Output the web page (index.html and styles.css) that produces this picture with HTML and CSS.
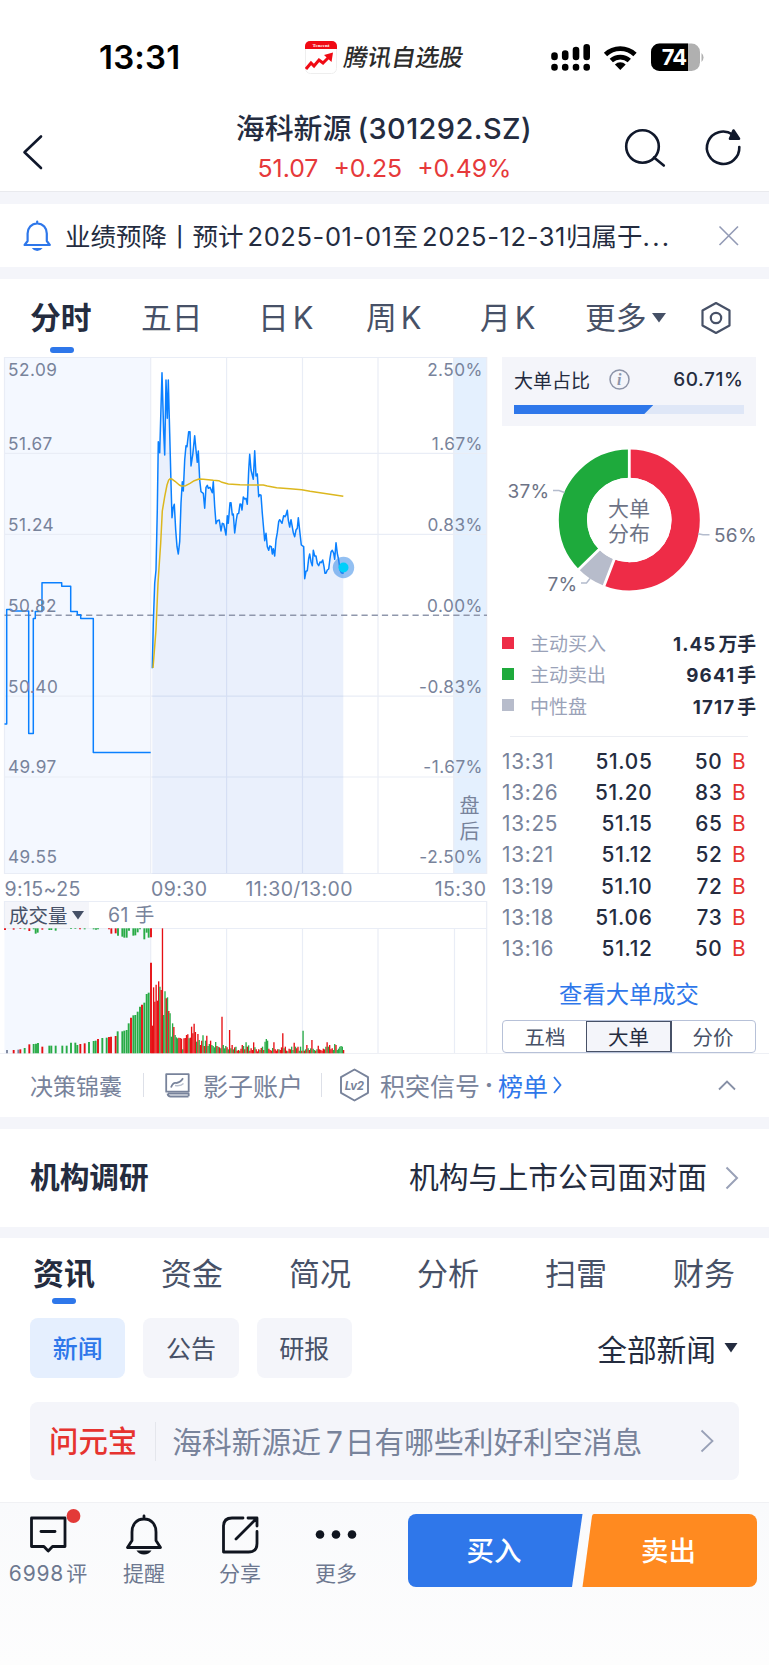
FILE: index.html
```html
<!DOCTYPE html>
<html lang="zh-CN">
<head>
<meta charset="utf-8">
<title>海科新源 (301292.SZ)</title>
<link rel="stylesheet" href="styles.css">
</head>
<body>
<div class="status">
  <div class="clock">13:31</div>
  <div class="brand">
    <svg class="brand-icon" width="32" height="33" viewBox="0 0 32 33">
      <rect x=".5" y=".5" width="31" height="32" rx="5" fill="#fff" stroke="#eee"/>
      <path d="M0 8V5a5 5 0 0 1 5-5h22a5 5 0 0 1 5 5v3z" fill="#f00a14"/>
      <text x="16" y="6.2" text-anchor="middle" class="tiny">Tencent</text>
      <path d="M1 28l5-6 3 3 5-6 4 3 8-8" fill="none" stroke="#f00a14" stroke-width="3"/>
      <path d="M19 14l9-2.500-1.500 9.500z" fill="#f00a14"/>
    </svg>
    <span class="brand-name">腾讯自选股</span>
  </div>
  <svg class="status-icons" width="156" height="30" viewBox="550 43 156 30">
    <g stroke="#000" stroke-width="6.600" stroke-linecap="round">
      <path d="M554.500 55.500v1.500M565.200 53.500v3.500M576 50v7M586.700 47.300v9.700"/>
      <path d="M554.500 67v.5M565.200 67v.5M576 67v.5M586.700 67v.5"/>
    </g>
    <g fill="none" stroke="#000" stroke-width="4.800">
      <path d="M605.500 54.500a21.500 21.500 0 0 1 29.500 0"/>
      <path d="M611.300 60.600a13.300 13.300 0 0 1 18 0"/>
    </g>
    <path d="M620.300 70l-5.400-5.600a8 8 0 0 1 10.800 0z"/>
    <rect x="651" y="43.500" width="49" height="27.500" rx="8.500" fill="#b0b0b0"/>
    <path d="M688 43.500h-28.500a8.500 8.500 0 0 0-8.500 8.500v10.500a8.500 8.500 0 0 0 8.500 8.500h28.500z"/>
    <path d="M701.500 53a6 6 0 0 1 0 9z" fill="#b0b0b0"/>
    <text x="674" y="65" text-anchor="middle" class="batt">74</text>
  </svg>
</div>

<header class="head">
  <svg width="30" height="40" viewBox="18 132 30 40" class="ln back"><path d="M41 136.500L24.500 152.300L41 168"/></svg>
  <div class="head-mid">
    <h1 class="title">海科新源<span class="code">(301292.SZ)</span></h1>
    <div class="quote"><span>51.07</span><span>+0.25</span><span>+0.49%</span></div>
  </div>
  <svg width="124" height="44" viewBox="620 126 124 44" class="ln acts">
    <circle cx="642.500" cy="146.500" r="16.300"/><path d="M654 157.500l9.800 8"/>
    <path d="M732.500 134.500a16.200 16.200 0 1 0 6.800 12.500"/><path d="M733.500 130.500l5.500 8.200h-9z" fill="#10182b"/>
  </svg>
</header>

<section class="notice">
  <svg width="30" height="32" viewBox="22 220 30 32">
    <path d="M37.200 223.500v-2M37.200 223.500c-6 0-9.600 4.600-9.600 10v7.500l-3 4h25.200l-3-4v-7.500c0-5.400-3.600-10-9.600-10z" fill="none" stroke="#2e77ea" stroke-width="2.200" stroke-linecap="round" stroke-linejoin="round"/>
    <path d="M31.800 248h10.800q-2 3-5.400 3t-5.400-3z" fill="#2e77ea"/>
  </svg>
  <p class="notice-text">业绩预降丨预计<span class="num">2025-01-01</span>至<span class="num">2025-12-31</span>归属于<span class="dots">...</span></p>
  <svg width="22" height="22" viewBox="0 0 22 22"><path d="M1.500 1.500l18.500 18.500M20 1.500l-18.500 18.500" stroke="#929ab5" stroke-width="1.600"/></svg>
</section>

<nav class="tabs">
  <span class="on">分时</span><span>五日</span><span>日<i>K</i></span><span>周<i>K</i></span><span>月<i>K</i></span>
  <span>更多<svg class="caret" width="14" height="10" viewBox="0 0 14 10"><path d="M0 0h14l-7 9.500z" fill="#455066"/></svg></span>
  <svg class="gear" width="32" height="34" viewBox="0 0 32 34" fill="none" stroke="#475167" stroke-width="2.200" stroke-linejoin="round"><path d="M16 2l13.500 7.500v15L16 32 2.500 24.500v-15z"/><circle cx="16" cy="17" r="5.200"/></svg>
</nav>

<main class="market">
  <svg class="chart" width="490" height="697" viewBox="0 357 490 697">
    <rect x="4.500" y="357" width="146" height="516.500" fill="#f4f8ff"/>
    <rect x="453.700" y="357" width="33" height="516.500" fill="#e4f0fe"/>
    <rect x="4.500" y="901" width="84.500" height="27" fill="#f4f5fa"/>
    <rect x="4.500" y="928" width="146" height="125" fill="#f4f8ff"/>
    <g fill="none" stroke="#e9edf6" stroke-width="1.200">
      <path d="M4.500 357.500h482.200v516h-482.200zM4.500 453.400h482M4.500 534.300h482M4.500 696.200h482M4.500 777h482"/>
      <path d="M150.700 357v516M226.600 357v516M302.500 357v516M378 357v516M453.700 357v516"/>
      <path d="M4.500 901.500h482.200v27h-482.200zM150.700 928v125M226.600 928v125M302.500 928v125M378 928v125M454.500 928v125M486.700 928v125"/>
    </g>
    <path id="area" fill="#2e6be0" fill-opacity=".1"/>
    <path d="M4.500 615.300h482.500" stroke="#8f97ac" stroke-width="1.500" stroke-dasharray="6.200 4"/>
    <polyline id="price" class="trend blue"/>
    <polyline class="trend gold" points="153,668 156,630 158,583 160.700,543 162.300,511 164.700,496.700 167,485 168.700,480 170.300,478.700 172.300,479.300 175,481.300 179.300,485 181.300,486 185.700,485.700 190,483.300 194.300,480.700 199,479 203.300,479.300 213.300,480.300 218.700,480.700 222,482.300 228.300,484 240,484.700 253.300,485 263.300,485 267.300,486 276.700,487.700 290,488.700 301.700,489.700 310,491.300 323.300,493.300 343.300,496.300"/>
    <path class="trend blue" d="M4.500 724H6.700V609.500H10.700L13 611H28.700V733.500H33.300V618.600H35.300V611.400H42V582.800H61.700V586.300H70.700V611.400H77.300V614.800H80.700V618.600H93.300V752.500H150.700"/>
    <circle cx="343.500" cy="567.500" r="10.700" fill="#2f86e6" fill-opacity=".52"/>
    <circle cx="343.500" cy="567.500" r="5" fill="#00cffa"/>
    <g class="lab">
      <text x="8" y="375.700">52.09</text><text x="8" y="450">51.67</text><text x="8" y="530.900">51.24</text><text x="8" y="611.600">50.82</text><text x="8" y="692.500">50.40</text><text x="8" y="773.200">49.97</text><text x="8" y="863">49.55</text>
    </g>
    <g class="lab" text-anchor="end">
      <text x="483" y="375.700">2.50%</text><text x="483" y="450">1.67%</text><text x="483" y="530.900">0.83%</text><text x="483" y="611.600">0.00%</text><text x="483" y="692.500">-0.83%</text><text x="483" y="773.200">-1.67%</text><text x="483" y="863">-2.50%</text>
    </g>
    <g class="after"><text x="459.500" y="812.500">盘</text><text x="459.500" y="838.500">后</text></g>
    <g class="time">
      <text x="4.500" y="895.500">9:15~25</text><text x="151" y="895.500">09:30</text><text x="245.500" y="895.500">11:30/13:00</text><text x="486.500" y="895.500" text-anchor="end">15:30</text>
      <text x="108" y="922">61 手</text><text x="9" y="922.500" class="dark">成交量</text>
    </g>
    <path d="M72 911h12l-6 8.500z" fill="#455066"/>
    <g id="bars"></g>
  </svg>

  <aside class="side">
    <div class="ratio">
      <div class="ratio-row"><span>大单占比</span>
        <svg width="21" height="21" viewBox="0 0 21 21"><circle cx="10.500" cy="10.500" r="9.500" fill="none" stroke="#8d94a8" stroke-width="1.500"/><text x="10.300" y="15.800" text-anchor="middle" class="info">i</text></svg>
        <b>60.71%</b></div>
      <div class="track"><div class="fill"></div></div>
    </div>
    <svg class="donut" width="260" height="201" viewBox="502 426 260 201">
      <g fill="none" stroke-width="28.200" transform="rotate(-90 629.300 520)">
        <circle cx="629.300" cy="520" r="56.400" stroke="#ee2c47" pathLength="100" stroke-dasharray="56 44"/>
        <circle cx="629.300" cy="520" r="56.400" stroke="#b7bccb" pathLength="100" stroke-dasharray="6.700 93.300" stroke-dashoffset="-56"/>
        <circle cx="629.300" cy="520" r="56.400" stroke="#1eaa3c" pathLength="100" stroke-dasharray="37.300 62.700" stroke-dashoffset="-62.700"/>
      </g>
      <path d="M629.300 520V448M629.300 520l-25.900 67.500M629.300 520l-51.800 50.600" stroke="#fff" stroke-width="2.800"/>
      <circle cx="629.300" cy="520" r="42.200" fill="#fff"/>
      <path d="M553 490.500h6l5.500 2M698 533.800l5 1h6.500M581 583h5.500l3.500-4.500" fill="none" stroke="#b4bccd" stroke-width="1.500"/>
      <g class="pct"><text x="507.500" y="498">37%</text><text x="714" y="542">56%</text><text x="547.500" y="590.500">7%</text></g>
      <g class="mid" text-anchor="middle"><text x="629" y="516">大单</text><text x="629" y="541.200">分布</text></g>
    </svg>
    <dl class="legend">
      <div><i class="red"></i><dt>主动买入</dt><dd>1.45<em>万手</em></dd></div>
      <div><i class="green"></i><dt>主动卖出</dt><dd>9641<em>手</em></dd></div>
      <div><i class="grey"></i><dt>中性盘</dt><dd>1717<em>手</em></dd></div>
    </dl>
    <div class="rule"></div>
    <div class="ticks">
      <div><span>13:31</span><b>51.05</b><b>50</b><em>B</em></div>
      <div><span>13:26</span><b>51.20</b><b>83</b><em>B</em></div>
      <div><span>13:25</span><b>51.15</b><b>65</b><em>B</em></div>
      <div><span>13:21</span><b>51.12</b><b>52</b><em>B</em></div>
      <div><span>13:19</span><b>51.10</b><b>72</b><em>B</em></div>
      <div><span>13:18</span><b>51.06</b><b>73</b><em>B</em></div>
      <div><span>13:16</span><b>51.12</b><b>50</b><em>B</em></div>
    </div>
    <div class="link">查看大单成交</div>
    <div class="seg"><span>五档</span><span class="on">大单</span><span>分价</span></div>
  </aside>
</main>

<section class="tools">
  <span class="t1">决策锦囊</span><i class="bar"></i>
  <svg class="book" width="25" height="25" viewBox="0 0 25 25" fill="none" stroke="#78839b" stroke-width="1.800" stroke-linejoin="round"><path d="M1.200 1.200h22.500v17.500h-22.500zM2.500 20.500q.5 3 3 3h18M3 20.700h20.700v2.600"/><path d="M6 14.500q2-5.500 5.500-4.500 4-.5 6.500-4.700"/><path d="M10 12.500q6 1 8.500-2" stroke="#b9c0ce" stroke-width="1.300"/></svg>
  <span class="t2">影子账户</span><i class="bar b2"></i>
  <svg class="hex" width="31" height="34" viewBox="0 0 31 34"><path d="M15.500 1.500l13.500 7.700v15.600l-13.500 7.700L2 24.800V9.200z" fill="none" stroke="#78839b" stroke-width="1.900" stroke-linejoin="round"/><text x="15.300" y="21.500" text-anchor="middle" class="lv">Lv2</text></svg>
  <span class="t3">积突信号</span><span class="dot">·</span><span class="t4">榜单</span>
  <svg class="go" width="9" height="20" viewBox="0 0 9 20"><path d="M1 2l6.500 8L1 18" fill="none" stroke="#2e77ea" stroke-width="1.800"/></svg>
  <svg class="up" width="18" height="12" viewBox="0 0 18 12"><path d="M1 10.500l8-8 8 8" fill="none" stroke="#8790a6" stroke-width="1.800"/></svg>
</section>

<section class="research">
  <h2>机构调研</h2><span>机构与上市公司面对面</span>
  <svg width="14" height="24" viewBox="0 0 14 24"><path d="M1.500 1.500L12 12 1.500 22.500" fill="none" stroke="#99a1b7" stroke-width="2"/></svg>
</section>

<section class="news">
  <nav class="ntabs"><span class="on">资讯</span><span>资金</span><span>简况</span><span>分析</span><span>扫雷</span><span>财务</span></nav>
  <div class="pills"><span class="on">新闻</span><span>公告</span><span>研报</span>
    <strong>全部新闻</strong><svg width="14" height="10" viewBox="0 0 14 10"><path d="M.5 0h13l-6.500 9.500z" fill="#242c3f"/></svg></div>
  <div class="ask"><b>问元宝</b><i></i><span>海科新源近<u>7</u>日有哪些利好利空消息</span>
    <svg width="14" height="24" viewBox="0 0 14 24"><path d="M1.500 1.500L12.500 12 1.500 22.500" fill="none" stroke="#99a1b7" stroke-width="1.800"/></svg></div>
</section>

<footer class="dock">
  <div class="dock-item"><svg width="96" height="48" viewBox="0 1508 96 48" class="dk"><path d="M31.500 1518h33.500v28.500h-12.500l-4.300 4.500-4.300-4.500h-12.400z"/><path d="M41 1531.500h14"/><circle cx="73.500" cy="1516" r="6.900" fill="#e33a38" stroke="none"/></svg><span><s>6998</s>评</span></div>
  <div class="dock-item"><svg width="96" height="48" viewBox="96 1508 96 48" class="dk"><path d="M144 1519v-3M144 1519c-8 0-12 6-12 13v8.500l-4.500 7h33l-4.500-7V1532c0-7-4-13-12-13z"/><path d="M136.500 1550.500h15q-2.500 4-7.500 4t-7.500-4z" fill="#10151f" stroke="none"/></svg><span>提醒</span></div>
  <div class="dock-item"><svg width="96" height="48" viewBox="192 1508 96 48" class="dk"><path d="M243 1518h-11q-8.500 0-8.500 8.500v25.500h25q8.500 0 8.500-8.500v-12"/><path d="M248 1518h9v8M256.500 1518.500l-20.500 20.500"/></svg><span>分享</span></div>
  <div class="dock-item"><svg width="96" height="48" viewBox="288 1508 96 48"><g fill="#10151f"><circle cx="320" cy="1534.500" r="4.300"/><circle cx="336" cy="1534.500" r="4.300"/><circle cx="352" cy="1534.500" r="4.300"/></g></svg><span>更多</span></div>
  <div class="trade">
    <svg class="trade-bg" width="349" height="73" viewBox="0 0 349 73"><path d="M8 0h166.500l-10.500 73H8a8 8 0 0 1-8-8V8a8 8 0 0 1 8-8z" fill="#2f77ea"/><path d="M186 0h155a8 8 0 0 1 8 8v57a8 8 0 0 1-8 8h-166.500l9.500-71q.5-2 2-2z" fill="#ff8a20"/></svg>
    <span>买入</span><span>卖出</span>
  </div>
</footer>
<script src="chart.js"></script>
</body>
</html>
```
FILE: styles.css
```css
* { box-sizing: border-box; }
body { margin: 0; width: 769px; height: 1665px; overflow: hidden; background: #fff; color: #242c3f;
  font-family: Inter, "Noto Sans CJK SC", sans-serif; }
h1, h2, p, dl, dd, dt { margin: 0; font-weight: 400; }
i, em { font-style: normal; }
u, s { text-decoration: none; }
svg { display: block; flex: none; }
span, b, strong { white-space: nowrap; }

.status { display: flex; height: 100px; padding-top: 41px; }
.clock { width: 305px; padding-left: 99px; font-size: 33px; font-weight: 600; line-height: 33px; color: #000; letter-spacing: .2px; }
.brand { display: flex; width: 245px; }
.brand-name { margin-left: 5px; font-size: 23.800px; font-weight: 500; line-height: 34px; transform: skewX(-10deg); color: #2b2b2b; }
.tiny { font: 700 5px "Liberation Serif", serif; fill: #fff; }
.status-icons { margin-top: 2px; }
.batt { font: 700 22px Inter, sans-serif; fill: #fff; letter-spacing: -1px; }

.head { display: flex; height: 92px; border-bottom: 1px solid #e9eaee; }
.ln { fill: none; stroke: #10182b; stroke-width: 2.6; stroke-linecap: round; stroke-linejoin: round; }
.back { margin: 32px 0 0 18px; }
.head-mid { width: 572px; padding-left: 100px; text-align: center; }
.title { margin-top: 9px; font-size: 28.900px; font-weight: 500; line-height: 40px; white-space: nowrap; }
.code { margin-left: 6px; letter-spacing: .45px; }
.quote { display: flex; justify-content: center; gap: 15px; margin-top: 3px; padding-left: 1px; font-size: 24.800px; line-height: 33px; color: #e6393a; }
.acts { margin-top: 26px; }

.notice { display: flex; align-items: center; height: 87px; padding: 0 29px 0 22px; border: solid #f4f5fa; border-width: 12px 0; }
.notice-text { flex: 1; margin: -2px 0 0 13px; font-size: 25.500px; white-space: nowrap; }
.num { margin-left: 4px; letter-spacing: .6px; }
.dots { letter-spacing: 2.300px; }

.tabs { display: grid; grid-template-columns: 111px 117px 108px 114px 105px 114px auto; height: 78px; padding-left: 30px; font-size: 30.800px; line-height: 78px; color: #475167; }
.tabs span { position: relative; }
.tabs i { margin-left: 4px; }
.tabs .on, .ntabs .on { font-weight: 600; color: #242c3f; }
.tabs .on::after, .ntabs .on::after { content: ""; position: absolute; left: 20px; top: 68px; width: 24px; height: 6px; border-radius: 3px; background: #2e77ea; }
.caret { display: inline-block; margin-left: 5px; vertical-align: 6px; }
.gear { margin: 22px 0 0 1px; }

.market { display: flex; height: 697px; border-bottom: 1px solid #eef0f5; }
.trend { fill: none; stroke-width: 1.500; stroke-linejoin: round; }
.blue { stroke: #0a80ff; }
.gold { stroke: #dcb71e; }
.lab { font-size: 17.200px; fill: #78839b; letter-spacing: .5px; }
.after { font-size: 20px; fill: #78839b; }
.time { font-size: 19.500px; fill: #78839b; letter-spacing: .4px; }
.time .dark { fill: #475167; letter-spacing: 0; }

.side { width: 254px; margin-left: 12px; }
.ratio { height: 69px; padding: 8px 12.500px 0 12px; background: #f4f5fa; }
.ratio-row { display: flex; align-items: center; height: 28px; font-size: 19px; }
.ratio-row svg { margin-left: 19px; }
.ratio-row b { margin-left: auto; font-weight: 500; letter-spacing: .6px; }
.info { font: italic 700 16px "Liberation Serif", serif; fill: #8d94a8; }
.track { height: 9px; margin-top: 12px; background: #dfe7f7; }
.fill { width: 60.700%; height: 9px; background: #2e77ea; clip-path: polygon(0 0, 100% 0, calc(100% - 9px) 100%, 0 100%); }
.pct { font-size: 19px; fill: #6d7386; letter-spacing: .3px; }
.mid { font-size: 21px; fill: #6d7386; }
.legend div { display: flex; align-items: center; height: 31.300px; font-size: 19px; color: #9aa2b8; }
.legend i { width: 12px; height: 12px; margin-right: 16px; }
.red { background: #ee2c47; }
.green { background: #1eaa3c; }
.grey { background: #b7bccb; }
.legend dd { margin-left: auto; font-weight: 700; font-size: 18.800px; letter-spacing: 1.100px; color: #242c3f; }
.legend em { margin-left: 2px; letter-spacing: 0; }
.rule { height: 1px; margin: 15.500px 8px 8px; background: #eceef3; }
.ticks div { display: grid; grid-template-columns: 70px 80.500px 70px 11px; height: 31.300px; align-items: center; font-size: 20.800px; letter-spacing: .7px; }
.ticks span { color: #78839b; }
.ticks b { font-weight: 500; text-align: right; }
.ticks em { margin-left: 9.500px; color: #e6332f; }
.link { height: 56px; line-height: 61px; text-align: center; font-size: 23.300px; color: #2e77ea; }
.seg { display: grid; grid-template-columns: 1fr 1fr 1fr; height: 33px; border: 1px solid #b7c1d8; border-radius: 4px; font-size: 20.500px; line-height: 33px; text-align: center; color: #475167; }
.seg span { height: 31px; }
.seg .on { margin: 0 -1px; border: solid #475167; border-width: 1px 2px 1px 1px; line-height: 31px; background: #f4f5fa; color: #242c3f; }

.tools { display: flex; align-items: center; height: 63px; padding: 0 0 1px 30px; color: #78839b; font-size: 25px; }
.t1 { font-size: 23px; width: 92px; }
.bar { width: 1px; height: 24px; margin-left: 21px; background: #dde0e8; }
.book { margin-left: 21px; }
.t2 { margin-left: 13px; width: 100px; }
.b2 { margin-left: 18px; }
.hex { margin-left: 17px; }
.lv { font: italic 700 11.500px Inter, sans-serif; fill: #78839b; letter-spacing: -.3px; }
.t3 { margin-left: 10px; }
.dot { width: 18px; text-align: center; font-weight: 700; }
.t4 { color: #2e77ea; }
.go { margin-left: 5px; }
.up { margin-left: auto; margin-right: 33px; }

.research { display: flex; align-items: center; height: 121px; padding: 0 30px; border: solid #f4f5fa; border-width: 12px 0 11px; font-size: 29.800px; line-height: 40px; }
.research h2, .research span { margin-top: -2px; }
.research h2 { flex: 1; font-size: 29.700px; font-weight: 700; }
.research svg { margin-left: 18px; }

.ntabs { display: grid; grid-template-columns: repeat(6, 128px); height: 64px; line-height: 71px; font-size: 31px; text-align: center; color: #475167; }
.ntabs span { position: relative; }
.ntabs .on::after { left: 52px; top: 60px; }
.pills { display: flex; align-items: center; gap: 18px; height: 60px; margin: 16px 31px 0 30px; }
.pills span { width: 95.300px; height: 60px; border-radius: 8px; background: #f4f5fa; color: #475167; font-size: 25px; line-height: 62px; text-align: center; }
.pills .on { background: #e5effe; color: #2e77ea; font-weight: 500; }
.pills strong { margin-left: auto; font-size: 29.700px; font-weight: 400; line-height: 60px; padding-top: 3px; }
.pills svg { margin-left: -10px; margin-top: 0; }
.ask { display: flex; align-items: center; height: 78px; margin: 24px 30px 0; padding: 0 25px 0 19px; border-radius: 8px; background: #f4f5fa; font-size: 29.750px; line-height: 40px; color: #78839b; }
.ask b, .ask span { margin-top: 1px; }
.ask b { font-size: 29.400px; font-weight: 500; color: #e6332f; }
.ask i { width: 1px; height: 39px; margin: 0 16px 0 18px; background: #e4e6ec; }
.ask u { margin: 0 2px 0 5px; }
.ask svg { margin-left: auto; }

.dock { display: flex; height: 163px; margin-top: 22px; border-top: 1px solid #f0f1f4; background: linear-gradient(#f9fafc, #fdfdfd); }
.dock-item { width: 96px; padding-top: 5px; font-size: 21px; color: #6d7890; text-align: center; }
.dock-item span { display: block; line-height: 34px; margin-top: 1px; }
.dock-item s { margin-right: 2px; letter-spacing: .8px; }
.dk { fill: none; stroke: #10151f; stroke-width: 2.800; stroke-linecap: round; stroke-linejoin: round; }
.trade { position: relative; display: grid; grid-template-columns: 173px 176px; width: 349px; height: 73px; margin: 11px 0 0 23.500px; color: #fff; font-size: 27.500px; font-weight: 500; line-height: 75px; text-align: center; }
.trade-bg { position: absolute; left: 0; top: 0; }
.trade span { position: relative; }
```
FILE: chart.js
```js
// Intraday price, in thirds of a pixel from (140, 350).
const price = "37,955 40,820 44,700 48,660 52,480 55,275 59,308 66,68 71,250 74,315 78,90 82,205 85,90 89,250 93,400 96,503 99,475 103,463 107,540 111,590 115,612 119,575 123,460 127,395 130,423 134,330 138,287 141,290 146,245 150,245 153,348 158,315 164,257 168,300 172,337 175,303 179,390 183,425 190,430 194,475 198,412 202,406 205,415 210,412 217,428 220,395 224,470 228,521 232,512 238,510 243,543 247,520 251,522 258,555 262,497 265,520 270,458 273,458 277,495 280,492 284,549 289,510 292,492 296,490 300,462 303,463 306,480 310,441 314,447 318,445 322,463 326,360 329,313 333,360 340,388 344,302 348,378 352,372 356,440 359,434 363,436 367,490 374,572 378,550 382,590 386,601 389,588 394,590 397,612 400,596 404,618 408,570 412,548 416,515 419,509 426,520 431,497 435,500 438,495 442,481 445,510 449,531 453,509 460,548 464,560 468,540 472,535 475,503 480,550 484,585 491,590 494,686 498,664 502,662 506,625 509,612 513,635 517,647 520,601 524,618 528,618 532,640 536,647 540,636 544,638 548,630 552,650 555,670 558,670 562,660 566,657 570,625 573,606 577,601 581,610 584,628 588,578 592,610 596,630 600,660 604,668 609,670 610,653"
  .split(" ").map(p => p.split(",").map(Number)).map(([x, y]) => [(140 + x / 3).toFixed(1), (350 + y / 3).toFixed(1)]);
document.getElementById("price").setAttribute("points", price.join(" "));
document.getElementById("area").setAttribute("d", "M152.300 873.500L" + price.join("L") + "V873.500Z");

const colors = { r: "#e60f14", g: "#28ab46", n: "#7d88a0" };
const group = document.getElementById("bars");
function bar(x, top, bottom, width, color) {
  const el = document.createElementNS("http://www.w3.org/2000/svg", "path");
  el.setAttribute("d", `M${(x / 3).toFixed(2)} ${860 + bottom / 3}V${860 + top / 3}`);
  el.setAttribute("stroke", colors[color]);
  el.setAttribute("stroke-width", width);
  group.append(el);
}
// Call auction: matched volume rises from the floor, unmatched hangs from the ceiling.
"21,570n 41,570r 55,569n 61,568r 74,564g 88,553r 101,552g 108,551g 114,549g 127,560r 148,557g 154,557g 167,557g 187,557g 200,557g 213,548g 226,548g 232,555g 241,552r 254,550r 267,546g 281,543g 287,542g 294,537r 307,534g 320,533g 327,531r 333,530r 347,528r 353,514g 367,514g 373,512g 380,510g 386,490g 393,473r 400,466g 406,465g 413,455g 420,440g 426,434r 433,428g 440,402g 446,398g 453,308r"
  .split(" ").forEach(s => { const [x, t] = s.slice(0, -1).split(","); bar(+x, +t, 580, 1.9, s.slice(-1)); });
"15,210r 41,209r 61,207r 74,208g 88,213r 101,208g 107,221g 113,218g 127,209r 148,210g 154,210g 167,212g 213,207g 226,207g 240,208r 254,208g 281,208g 288,209g 294,208g 327,208r 334,221r 347,220r 354,227g 367,230g 373,233g 380,233g 387,212g 400,227g 406,226g 413,217g 420,208g 433,238g 440,218g 446,233g 453,232r"
  .split(" ").forEach(s => { const [x, b] = s.slice(0, -1).split(","); bar(+x, 205, +b, 1.9, s.slice(-1)); });
// Minute volume during continuous trading.
"r83 r198 r155 r206 r158 r216 g200 r190 r375 g115 g186 r165 g168 r127 g120 g50 g90 r79 g55 g48 g45 r47 r46 r44 g12 r45 r46 r55 r57 g45 r47 r80 r60 r89 r64 g35 r58 g40 r25 r38 g54 r22 g38 r53 g22 g28 r38 g25 g22 g18 g34 r22 g20 r18 g15 r110 g25 g15 g22 r18 g12 r70 g15 r25 g12 r18 g20 r8 r10 g8 r14 r25 g22 r12 g33 r20 g24 r8 r15 r10 r33 g18 r12 r6 r12 g10 r16 g20 r10 g35 g43 g38 r14 r10 r8 g16 r33 r12 r8 r12 g12 r10 r18 r60 g15 r20 r8 g6 r14 r12 g20 g10 r32 g20 r15 r20 g8 g20 r8 g68 r8 g12 r25 g15 r10 g15 r40 g14 g10 r8 g12 r23 r12 r10 r8 r14 r12 g20 r33 g20 r25 r12 r15 g10 g28 r25 g10 g14 g20 g22 g20 r10"
  .split(" ").forEach((s, i) => bar(457 + i * 3.8, 580 - s.slice(1), 580, 1.35, s[0]));
```
